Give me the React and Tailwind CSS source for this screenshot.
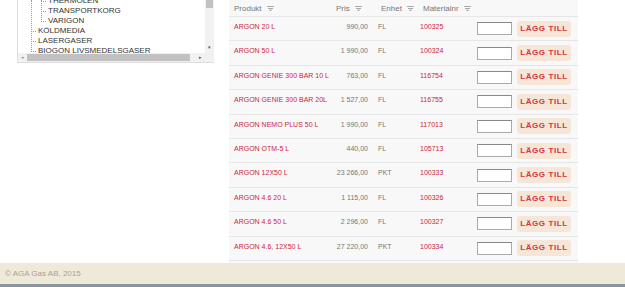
const rows = [
  { name: "ARGON 20 L", price: "990,00", unit: "FL", nr: "100325" },
  { name: "ARGON 50 L", price: "1 990,00", unit: "FL", nr: "100324" },
  { name: "ARGON GENIE 300 BAR 10 L", price: "763,00", unit: "FL", nr: "116754" },
  { name: "ARGON GENIE 300 BAR 20L", price: "1 527,00", unit: "FL", nr: "116755" },
  { name: "ARGON NEMO PLUS 50 L", price: "1 990,00", unit: "FL", nr: "117013" },
  { name: "ARGON OTM-5 L", price: "440,00", unit: "FL", nr: "105713" },
  { name: "ARGON 12X50 L", price: "23 266,00", unit: "PKT", nr: "100333" },
  { name: "ARGON 4.6 20 L", price: "1 115,00", unit: "FL", nr: "100326" },
  { name: "ARGON 4.6 50 L", price: "2 296,00", unit: "FL", nr: "100327" },
  { name: "ARGON 4.6, 12X50 L", price: "27 220,00", unit: "PKT", nr: "100334" },
];

const Funnel = () => (
  <svg className="ml-[5px] inline-block h-[5px] w-[7px] text-[#aaa]" viewBox="0 0 7 5" fill="currentColor">
    <path d="M0 0h7v1H0zM1 2h5v1H1zM2.5 3.5h2V5h-2z" />
  </svg>
);

// nested items hang off the line at 23px, top-level ones off the line at 13px
const TreeItem = ({ label, level }) => (
  <div className={`relative flex h-[10px] items-center ${level === 2 ? "pl-[30px]" : "pl-[20px]"}`}>
    <span
      className={`absolute top-[5px] h-px w-[5px] border-t border-dotted border-[#999] ${
        level === 2 ? "left-[23px]" : "left-[13px]"
      }`}
    />
    <span className="whitespace-nowrap">{label}</span>
  </div>
);

export default function App() {
  return (
    <div className="flex h-[287px] w-[625px] flex-col overflow-hidden bg-white font-['Liberation_Sans',Arial,sans-serif]">
      <div className="flex flex-1">
        {/* category tree */}
        <div className="ml-[17px] w-[197px]">
          <div className="relative flex h-[63px] border-b border-l border-[#ddd]">
            <div className="relative flex-1 overflow-hidden">
              <div className="absolute left-[13px] top-0 h-[50px] border-l border-dotted border-[#999]" />
              <div className="absolute left-[23px] top-0 h-[20px] border-l border-dotted border-[#999]" />
              <div className="-mt-[4px] text-[8px] leading-[10px] text-[#333]">
                <TreeItem label="THERMOLEN" level={2} />
                <TreeItem label="TRANSPORTKORG" level={2} />
                <TreeItem label="VARIGON" level={2} />
                <TreeItem label="KÖLDMEDIA" level={1} />
                <TreeItem label="LASERGASER" level={1} />
                <TreeItem label="BIOGON LIVSMEDELSGASER" level={1} />
              </div>
              {/* horizontal scrollbar */}
              <div className="absolute bottom-0 left-0 right-0 flex h-[9px] items-center bg-[#f1f1f1]">
                <span className="ml-[3px] text-[5px] leading-none text-[#999]">◂</span>
                <div className="ml-[3px] h-[7px] w-[163px] bg-[#c1c1c1]" />
                <span className="ml-auto mr-[3px] text-[5px] leading-none text-[#555]">▸</span>
              </div>
            </div>
            {/* vertical scrollbar */}
            <div className="flex w-[9px] flex-col items-center bg-[#f1f1f1]">
              <div className="h-[8px] w-[7px] bg-[#c1c1c1]" />
              <span className="mt-[37px] text-[5px] leading-none text-[#555]">▾</span>
            </div>
          </div>
        </div>

        {/* product table */}
        <div className="ml-[15px] flex h-[263px] w-[349px] flex-col bg-[#f8f8f8] text-[7px]">
          <div className="flex h-[17px] items-center border-b border-[#e6e6e6] pt-[1px] text-[8px] text-[#777]">
            <div className="flex w-[102px] items-center pl-[5px]">Produkt<Funnel /></div>
            <div className="flex w-[45px] items-center pl-[5px]">Pris<Funnel /></div>
            <div className="flex w-[42px] items-center pl-[5px]">Enhet<Funnel /></div>
            <div className="flex w-[60px] items-center pl-[5px]">Materialnr<Funnel /></div>
          </div>
          {rows.map((r) => (
            <div key={r.nr} className="flex h-[24.4px] border-b border-[#e6e6e6]">
              <div className="w-[102px] pl-[5px] pt-[5px] text-[#cc1f3d]">{r.name}</div>
              <div className="w-[40px] pr-[3px] pt-[5px] text-right text-[#777]">{r.price}</div>
              <div className="w-[47px] pl-[7px] pt-[5px] text-[#777]">{r.unit}</div>
              <div className="w-[58px] pl-[2px] pt-[5px] text-[#cc1f3d]">{r.nr}</div>
              <div className="flex flex-1 items-center">
                <input className="ml-[1px] h-[13px] w-[35px] border border-[#aaa] border-t-[#888] bg-white" />
                <button className="ml-[5px] h-[16px] w-[54px] rounded-[3px] bg-[#f6e6d8] text-[8px] font-bold tracking-[0.6px] text-[#d4343f]">
                  LÄGG TILL
                </button>
              </div>
            </div>
          ))}
        </div>
      </div>

      <div className="flex h-[21px] items-center bg-[#efe9da] pl-[5px] text-[8px] text-[#a9a293]">
        © AGA Gas AB, 2015
      </div>
      <div className="h-[3px] bg-[#8996a2]" />
    </div>
  );
}
